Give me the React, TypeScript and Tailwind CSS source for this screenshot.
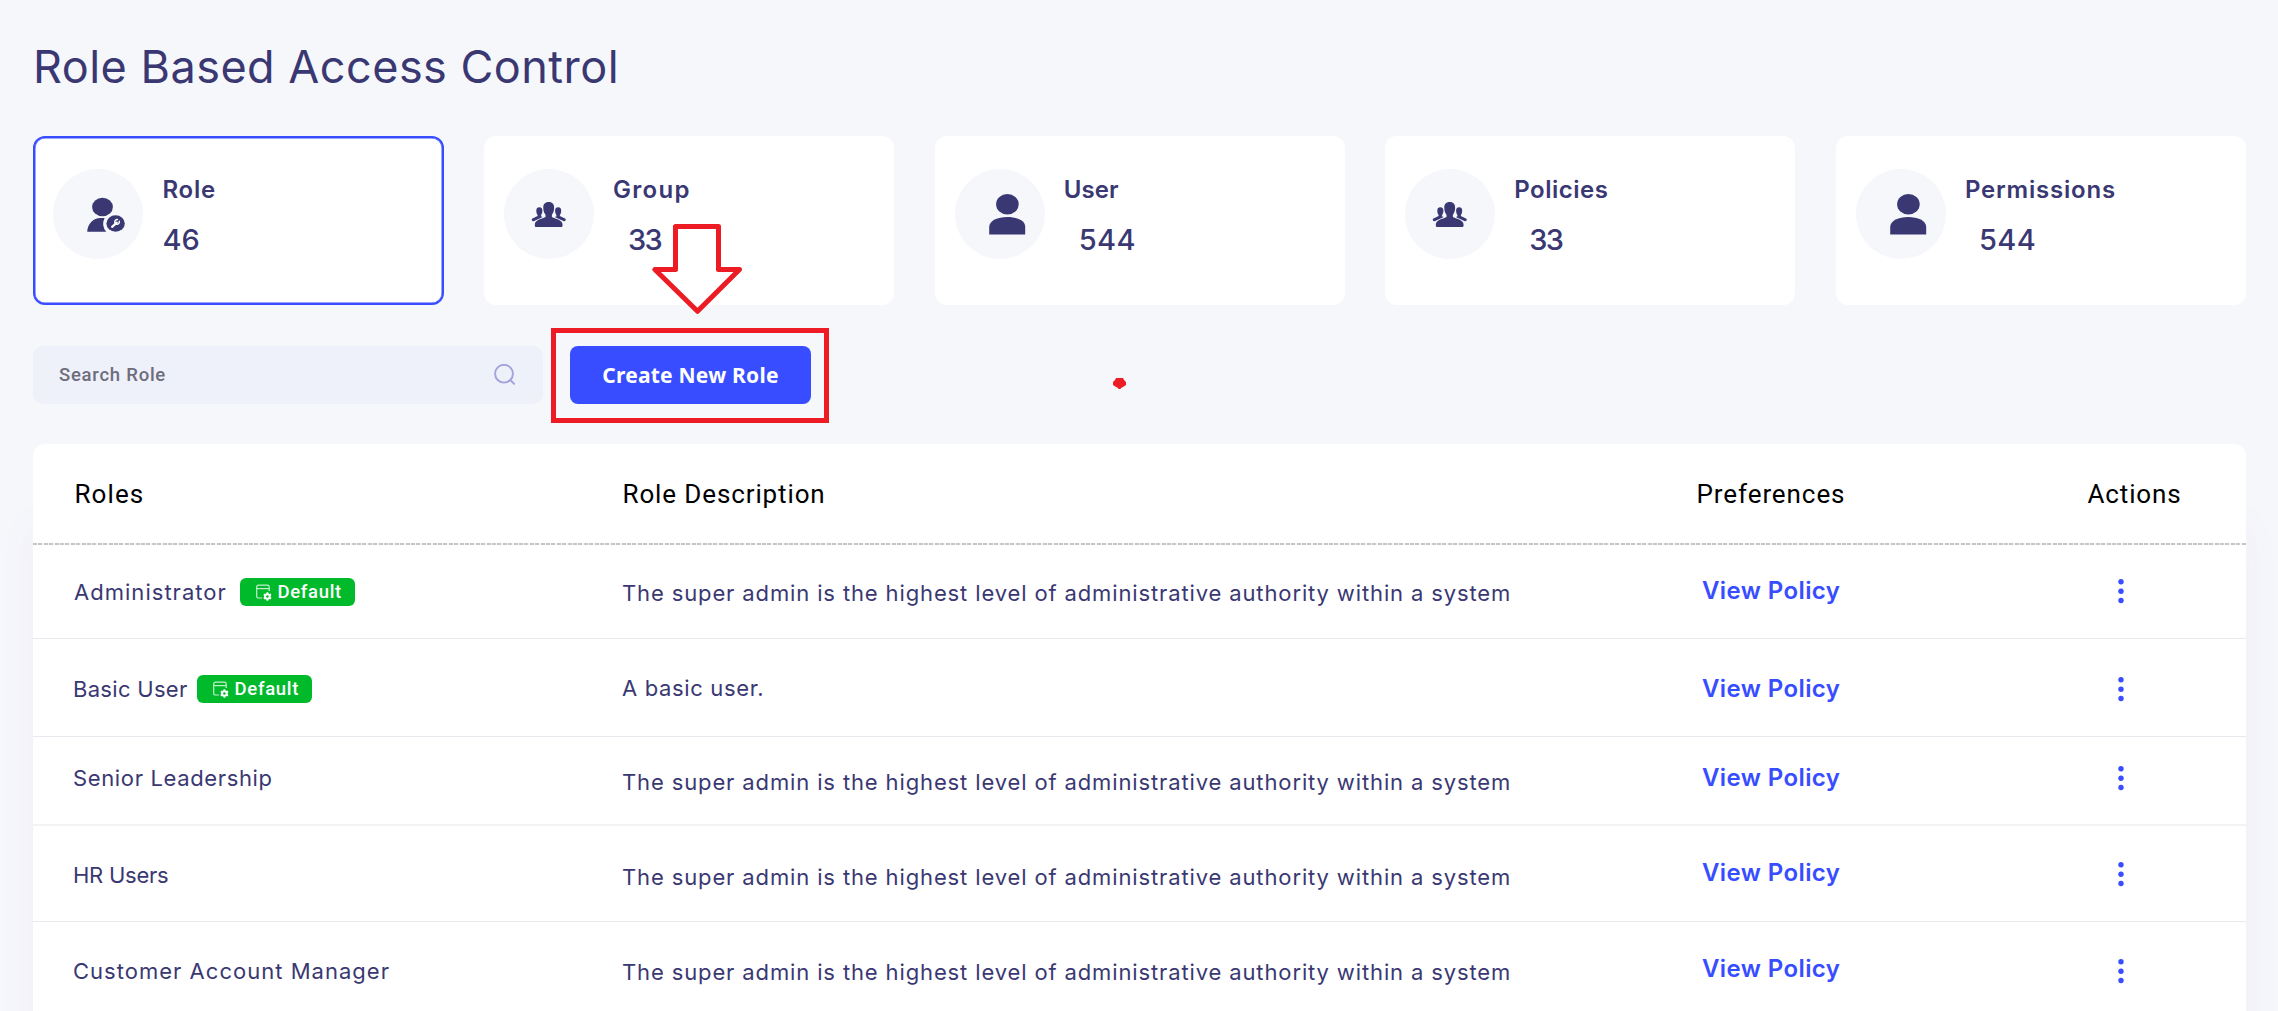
import React from "react";

function RoleIcon() {
  return (
    <svg viewBox="0 0 90 90" className="size-full" fill="#3a3872">
      <ellipse cx="49.500" cy="38" rx="10.4" ry="9.3" />
      <path d="M34.200 62.8 C34.600 55 40.100 49 47.600 49 H51.600 A13 13 0 0 0 53.200 62.8 Z" />
      <ellipse cx="62.600" cy="54.500" rx="9.200" ry="8.300" />
      <path d="M59.100 57.800 L63.800 53.700" stroke="#fff" strokeWidth="2.200" strokeLinecap="round" />
      <path
        d="M66.300 52.300 A2.300 2.300 0 1 1 64.300 50.600"
        fill="none"
        stroke="#fff"
        strokeWidth="1.500"
        strokeLinecap="round"
      />
    </svg>
  );
}

function GroupIcon() {
  return (
    <svg viewBox="0 0 90 90" className="size-full" fill="#3a3872">
      <path d="M44.700 33 C48.600 33 50.300 35.400 50.100 39 C50 41.800 49.400 44 47.900 45.700 V48 C52 50.300 58.600 50.600 58.600 55.700 C58.600 57.400 58.300 58 57.300 58 H32.100 C31.100 58 30.800 57.400 30.800 55.700 C30.800 50.600 37.400 50.300 41.500 48 V45.700 C40 44 39.400 41.800 39.300 39 C39.100 35.400 40.800 33 44.700 33 Z" />
      <path d="M35.300 38.300 C37.600 38.300 38.500 39.900 38.400 42 C38.300 43.800 37.800 45 37.100 46 V47.400 L38.800 47.900 L29.600 52.200 C28.200 52.400 27.300 50.900 28 49.700 L33.600 46.900 V46 C32.800 45 32.400 43.800 32.300 42 C32.200 39.900 33.100 38.300 35.300 38.300 Z" />
      <path d="M54.200 38.300 C51.900 38.300 51 39.900 51.100 42 C51.200 43.800 51.700 45 52.400 46 V47.400 L50.700 47.900 L59.900 52.200 C61.300 52.400 62.200 50.900 61.500 49.700 L55.900 46.900 V46 C56.700 45 57.100 43.800 57.200 42 C57.300 39.900 56.400 38.300 54.200 38.300 Z" />
    </svg>
  );
}

function UserIcon() {
  return (
    <svg viewBox="0 0 90 90" className="size-full" fill="#3a3872">
      <ellipse cx="52.400" cy="35.300" rx="11.300" ry="10.300" />
      <path d="M34.200 65.400 V58 C34.200 51.500 42.700 48 52.200 48 C61.700 48 70.200 51.500 70.200 58 V65.400 Z" />
    </svg>
  );
}

function SearchIcon() {
  return (
    <svg viewBox="0 0 22 22" className="size-[22px]" fill="none" stroke="#a3a3db" strokeWidth="1.900" strokeLinecap="round">
      <circle cx="10" cy="9.700" r="8.900" />
      <path d="M16.300 16 L20.200 19.900" />
    </svg>
  );
}

function DefaultBadge() {
  return (
    <span className="flex h-[28px] w-[115px] items-center rounded-md bg-[#00ba2b] pl-[15px] text-white">
      <svg viewBox="0 0 18 18" className="mt-[2px] size-[18px] shrink-0" fill="none">
        <path d="M7 14 H3.500 Q1.700 14 1.700 12.200 V3 Q1.700 1.200 3.500 1.200 H12.400 Q14.200 1.200 14.200 3 V7" stroke="#c4efcd" strokeWidth="1.200" />
        <path d="M1.700 4.600 H14.200" stroke="#c4efcd" strokeWidth="1.200" />
        <circle cx="12.400" cy="12.500" r="2.300" stroke="#fff" strokeWidth="2" />
        <path
          d="M12.400 8.300 V10 M12.400 15 V16.700 M8.760 10.400 L10.200 11.200 M14.600 13.800 L16.040 14.600 M16.040 10.400 L14.600 11.200 M10.200 13.800 L8.760 14.600"
          stroke="#fff"
          strokeWidth="1.800"
        />
      </svg>
      <span className="ml-[4.500px] font-[Roboto,sans-serif] text-[18.5px] leading-[28px] font-medium tracking-[0.7px]">Default</span>
    </span>
  );
}

const cards = [
  { label: "Role", track: "tracking-[0.8px]", value: "46", vtrack: "tracking-[0.2px]", Icon: RoleIcon, active: true },
  { label: "Group", track: "tracking-[1.3px]", value: "33", vtrack: "ml-[15px] tracking-[-1.6px]", Icon: GroupIcon, active: false },
  { label: "User", track: "tracking-[0.1px]", value: "544", vtrack: "ml-[15px] tracking-[0.5px]", Icon: UserIcon, active: false },
  { label: "Policies", track: "tracking-[0.5px]", value: "33", vtrack: "ml-[15px] tracking-[-1.6px]", Icon: GroupIcon, active: false },
  { label: "Permissions", track: "tracking-[0.8px]", value: "544", vtrack: "ml-[14px] tracking-[0.5px]", Icon: UserIcon, active: false },
];

const superAdmin = "The super admin is the highest level of administrative authority within a system";

const rows = [
  { name: "Administrator", nameCls: "mt-[32px] tracking-[1.03px]", badge: "mt-[33px] ml-[13px]", desc: superAdmin, descCls: "mt-[33px] tracking-[0.87px]", pref: "mt-[31px]", dots: "mt-[31px]", row: "h-[94px] border-b border-[#e8e8ee]" },
  { name: "Basic User", nameCls: "mt-[35px] tracking-[0.3px] -ml-px", badge: "mt-[36px] ml-[9.500px]", desc: "A basic user.", descCls: "mt-[34px] tracking-[0.65px]", pref: "mt-[35px]", dots: "mt-[35px]", row: "h-[98px] border-b border-[#e8e8ee]" },
  { name: "Senior Leadership", nameCls: "mt-[26px] tracking-[0.64px] -ml-px", badge: "", desc: superAdmin, descCls: "mt-[30px] tracking-[0.87px]", pref: "mt-[26px]", dots: "mt-[26px]", row: "h-[89px] border-b-2 border-[#f3f3f5]" },
  { name: "HR Users", nameCls: "mt-[34px] tracking-[-0.25px] -ml-px", badge: "", desc: superAdmin, descCls: "mt-[36px] tracking-[0.87px]", pref: "mt-[32px]", dots: "mt-[33px]", row: "h-[96px] border-b border-[#e8e8ee]" },
  { name: "Customer Account Manager", nameCls: "mt-[34px] tracking-[1.02px] -ml-px", badge: "", desc: superAdmin, descCls: "mt-[35px] tracking-[0.87px]", pref: "mt-[32px]", dots: "mt-[34px]", row: "h-[96px]" },
];

export default function App() {
  return (
    <div className="relative h-[1011px] w-full overflow-hidden bg-[#f6f7fb] font-[Inter,sans-serif] text-[#3a3872]">
      <div className="mr-[32px] ml-[33px] flex flex-col pt-[37px]">
        <h1 className="text-[45px] leading-[60px] tracking-[0.48px] whitespace-nowrap">Role Based Access Control</h1>

        <div className="mt-[39px] ml-[0.4px] grid grid-cols-5 gap-x-[40.500px]">
          {cards.map(({ label, track, value, vtrack, Icon, active }) => (
            <div
              key={label}
              className={
                "flex h-[169px] items-start rounded-xl border-2 bg-white pt-[31px] pl-[18px] " +
                (active ? "border-[#374dff] shadow-[inset_0_0_0_0.5px_#374dff]" : "border-white")
              }
            >
              <div className="size-[90px] shrink-0 rounded-full bg-[#f6f7fb]">
                <Icon />
              </div>
              <div className="mt-[6px] ml-[19px] flex flex-col whitespace-nowrap">
                <span className={"text-[24px] leading-[30px] font-semibold " + track}>{label}</span>
                <span className={"mt-[17px] text-[29px] leading-[36px] font-medium " + vtrack}>{value}</span>
              </div>
            </div>
          ))}
        </div>

        <div className="mt-[41px] flex h-[58px] gap-[27px]">
          <div className="flex w-[510px] items-center justify-between rounded-[10px] bg-[#eef0fa] pr-[27px] pl-[26px]">
            <span className="pt-[2px] font-[Roboto,sans-serif] text-[18.5px] font-medium tracking-[0.75px] text-[#6d6d7c]">Search Role</span>
            <SearchIcon />
          </div>
          <button className="w-[241px] rounded-lg bg-[#374dff] pt-px font-['Noto_Sans',sans-serif] text-[21px] font-bold tracking-[0.22px] whitespace-nowrap text-white">
            Create New Role
          </button>
        </div>

        <div className="mt-[40px] rounded-t-xl bg-white shadow-[0_80px_40px_rgba(125,70,170,0.05)]">
          <div className="grid h-[99px] grid-cols-[548px_1074px_391px_1fr] pt-[35px] pl-[41.500px] font-[Roboto,sans-serif] text-[26px] leading-[30px] text-black">
            <span className="tracking-[1.1px]">Roles</span>
            <span className="tracking-[0.88px]">Role Description</span>
            <span className="tracking-[0.92px]">Preferences</span>
            <span className="tracking-[0.85px]">Actions</span>
          </div>
          <div className="h-[2px] bg-[repeating-linear-gradient(90deg,#c6c6c6_0_4px,#f6f6f6_4px_5.4px)]" />
          {rows.map((r) => (
            <div
              key={r.name}
              className={"grid grid-cols-[548px_1074px_391px_1fr] items-start pl-[41px] text-[22px] leading-[30px] whitespace-nowrap " + r.row}
            >
              <div className="flex items-start">
                <span className={r.nameCls}>{r.name}</span>
                {r.badge && (
                  <div className={r.badge}>
                    <DefaultBadge />
                  </div>
                )}
              </div>
              <span className={r.descCls}>{r.desc}</span>
              <a className={"ml-[6px] text-[24px] leading-[30px] font-semibold tracking-[0.4px] text-[#374dff] " + r.pref}>View Policy</a>
              <svg viewBox="0 0 10 30" className={"ml-[29px] h-[30px] w-[10px] " + r.dots} fill="#374dff">
                <circle cx="5" cy="5.800" r="2.700" />
                <circle cx="5" cy="15.200" r="2.700" />
                <circle cx="5" cy="24.500" r="2.700" />
              </svg>
            </div>
          ))}
        </div>
      </div>

      {/* Red annotations drawn over the page */}
      <div className="absolute top-[328px] left-[551px] h-[95px] w-[278px] border-[5px] border-[#ed1c24]" />
      <svg viewBox="0 0 92 92" className="absolute top-[223px] left-[651px] size-[92px]" fill="none">
        <path d="M24.500 3.500 H67.500 V46.500 H88.500 L46.500 88.300 L3.900 46.500 H24.500 Z" stroke="#ed1c24" strokeWidth="5" strokeLinejoin="round" />
      </svg>
      <svg viewBox="0 0 13 11" className="absolute top-[378px] left-[1113px] h-[11px] w-[13px]" fill="#ed1c24">
        <path d="M3 0 H10 L11 2 L13 4 V7 L10 9 L8 10 L7.500 11 H5.500 L5 10 L3 9 L0 7 V4 L2 2 Z" />
      </svg>
    </div>
  );
}
